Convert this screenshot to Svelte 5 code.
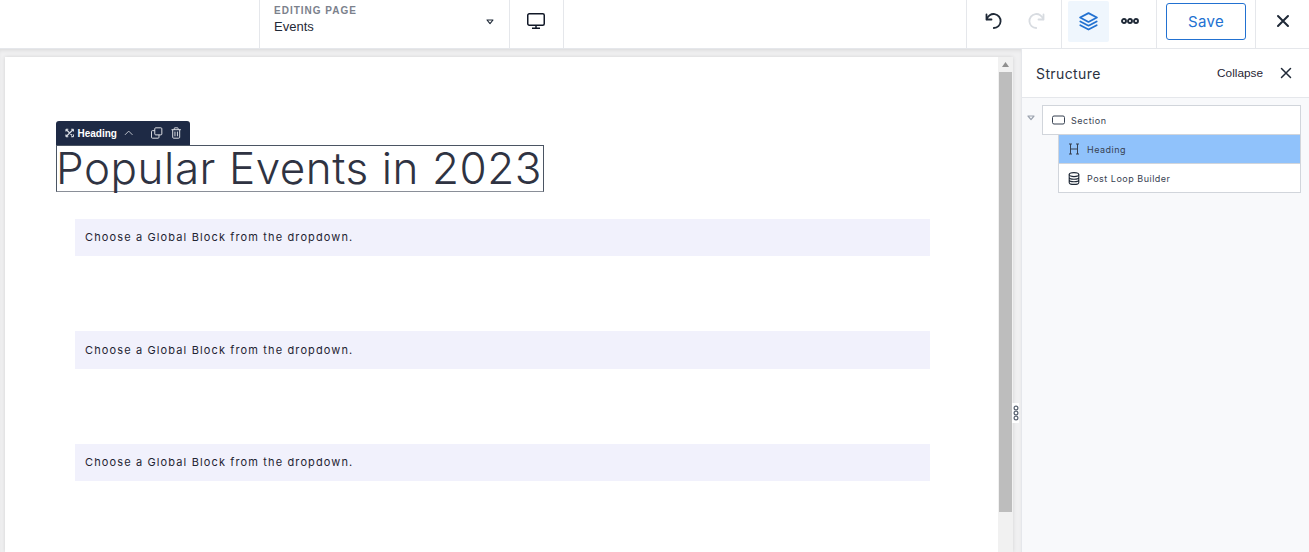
<script lang="ts">
  const blocks = [1, 2, 3];
</script>

<div class="app">
  <header class="topbar">
    <div class="page-select">
      <div class="page-text">
        <span class="eyebrow">EDITING PAGE</span>
        <span class="page-name">Events</span>
      </div>
      <svg class="caret" width="8" height="6" viewBox="0 0 8 6"><path d="M1 1h6L4 4.6z" fill="none" stroke="#1f2937" stroke-width="1.1" stroke-linejoin="round" /></svg>
    </div>
    <div class="device">
      <svg width="20" height="18" viewBox="0 0 20 18" fill="none" stroke="#111827" stroke-width="1.5">
        <rect x="1.75" y="1.75" width="16.5" height="11.5" rx="1.5" />
        <path d="M10 13.5v2.5M6 16.3h8" />
      </svg>
    </div>
    <div class="spacer"></div>
    <div class="history">
      <svg width="20" height="20" viewBox="0 0 20 20" fill="none" stroke="#1f2937" stroke-width="1.8" stroke-linecap="round" stroke-linejoin="round">
        <path d="M2.5 3.5v5h5" />
        <path d="M2.8 8.3A7 7 0 1 1 9.8 17" />
      </svg>
      <svg width="20" height="20" viewBox="0 0 20 20" fill="none" stroke="#d8dce1" stroke-width="1.8" stroke-linecap="round" stroke-linejoin="round">
        <path d="M17.5 3.5v5h-5" />
        <path d="M17.2 8.3A7 7 0 1 0 10.2 17" />
      </svg>
    </div>
    <div class="tools">
      <div class="layers">
        <svg width="21" height="21" viewBox="0 0 20 20" fill="none" stroke="#2271d1" stroke-width="1.7" stroke-linejoin="round" stroke-linecap="round">
          <path d="M10 2l8 4.2-8 4.2-8-4.2z" />
          <path d="M2.2 10l7.8 4 7.8-4" />
          <path d="M2.2 13.6l7.8 4 7.8-4" />
        </svg>
      </div>
      <svg class="dots" width="18" height="6" viewBox="0 0 18 6" fill="none" stroke="#1f2937" stroke-width="1.9">
        <circle cx="3" cy="3" r="2" /><circle cx="9" cy="3" r="2" /><circle cx="15" cy="3" r="2" />
      </svg>
    </div>
    <div class="save-wrap">
      <button class="save">Save</button>
    </div>
    <div class="close">
      <svg width="14" height="14" viewBox="0 0 14 14" stroke="#1f2937" stroke-width="2" stroke-linecap="round"><path d="M2 2l10 10M12 2L2 12" /></svg>
    </div>
  </header>

  <div class="body">
    <main class="canvas">
      <div class="page">
        <div class="page-scroll">
          <div class="heading-wrap">
            <div class="block-bar">
              <svg width="10" height="10" viewBox="0 0 10 10" fill="none" stroke="#d5d9e0" stroke-width="1.2"><path d="M1 1l8 8M9 1L1 9M1 1h2.5M1 1v2.5M9 1H6.5M9 1v2.5M1 9h2.5M1 9V6.5M9 9H6.5M9 9V6.5" /></svg>
              <span class="bar-label">Heading</span>
              <svg class="chev" width="10" height="6" viewBox="0 0 10 6" fill="none" stroke="#c3c8d0" stroke-width="1"><path d="M1 5l4-4 4 4" /></svg>
              <svg class="copy" width="12" height="12" viewBox="0 0 12 12" fill="none" stroke="#e5e7eb" stroke-width="1"><rect x="4" y="0.5" width="7.5" height="7.5" rx="1" /><path d="M4 3.5H1.5a1 1 0 0 0-1 1v6a1 1 0 0 0 1 1h6a1 1 0 0 0 1-1V8" /></svg>
              <svg class="trash" width="11" height="12" viewBox="0 0 11 12" fill="none" stroke="#e5e7eb" stroke-width="1"><path d="M0.5 2.5h10M3.5 2.5V1a.5.5 0 0 1 .5-.5h3a.5.5 0 0 1 .5.5v1.5M1.8 2.5v8a1 1 0 0 0 1 1h5.4a1 1 0 0 0 1-1v-8M4.2 4.5v5M6.8 4.5v5" /></svg>
            </div>
            <h1 class="heading">Popular Events in 2023</h1>
          </div>

          {#each blocks as block (block)}
            <div class="notice">Choose a Global Block from the dropdown.</div>
          {/each}
        </div>

        <div class="scrollbar">
          <svg width="7" height="5" viewBox="0 0 7 5"><path d="M3.5 0L7 5H0z" fill="#8f8f8f" /></svg>
          <div class="thumb"></div>
        </div>
      </div>

      <div class="resize">
        <svg width="6" height="16" viewBox="0 0 6 16" fill="none" stroke="#5b6472" stroke-width="1.2">
          <circle cx="3" cy="3" r="1.9" /><circle cx="3" cy="8" r="1.9" /><circle cx="3" cy="13" r="1.9" />
        </svg>
      </div>
    </main>

    <aside class="panel">
      <div class="panel-head">
        <span class="panel-title">Structure</span>
        <span class="collapse">Collapse</span>
        <svg width="12" height="12" viewBox="0 0 12 12" stroke="#1f2937" stroke-width="1.5" stroke-linecap="round"><path d="M1.5 1.5l9 9M10.5 1.5l-9 9" /></svg>
      </div>
      <div class="tree">
        <div class="section-row">
          <svg class="tree-caret" width="8" height="6" viewBox="0 0 8 6"><path d="M1 1h6L4 4.6z" fill="none" stroke="#9ca3af" stroke-width="1.2" stroke-linejoin="round" /></svg>
          <div class="node root">
            <svg width="13" height="10" viewBox="0 0 13 10" fill="none" stroke="#374151" stroke-width="1"><rect x="0.5" y="1" width="12" height="8" rx="1.5" /></svg>
            <span>Section</span>
          </div>
        </div>
        <div class="children">
          <div class="node selected">
            <svg width="12" height="12" viewBox="0 0 12 12" fill="none" stroke="#374151" stroke-width="1"><path d="M2.5 1v10M9.5 1v10M2.5 6h7M1 1h3M8 1h3M1 11h3M8 11h3" /></svg>
            <span>Heading</span>
          </div>
          <div class="node last">
            <svg width="12" height="13" viewBox="0 0 12 13" fill="none" stroke="#1f2937" stroke-width="1.1"><ellipse cx="6" cy="2.6" rx="4.8" ry="2" /><path d="M1.2 2.6v7.8c0 1.1 2.1 2 4.8 2s4.8-.9 4.8-2V2.6M1.2 5.2c0 1.1 2.1 2 4.8 2s4.8-.9 4.8-2M1.2 7.8c0 1.1 2.1 2 4.8 2s4.8-.9 4.8-2" /></svg>
            <span>Post Loop Builder</span>
          </div>
        </div>
      </div>
    </aside>
  </div>
</div>

<style>
  :global(body) {
    margin: 0;
    background: #fff;
    font-family: "Liberation Sans", Arial, sans-serif;
    overflow: hidden;
  }

  .app {
    width: 1309px;
    height: 552px;
    display: flex;
    flex-direction: column;
    overflow: hidden;
  }

  .topbar {
    height: 48px;
    flex: none;
    display: flex;
    background: #fff;
    border-bottom: 1px solid #e5e7eb;
    padding-left: 259px;
  }

  .page-select {
    width: 251px;
    display: flex;
    align-items: center;
    justify-content: space-between;
    padding: 0 15px 0 14px;
    box-sizing: border-box;
    border-left: 1px solid #e5e7eb;
    border-right: 1px solid #e5e7eb;
  }

  .page-text {
    display: flex;
    flex-direction: column;
    gap: 2px;
    margin-top: -9px;
  }

  .eyebrow {
    font-size: 10px;
    line-height: 12px;
    letter-spacing: 1px;
    font-weight: 700;
    color: #7b818c;
  }

  .page-name {
    font-size: 13px;
    line-height: 16px;
    color: #1f2937;
  }

  .caret {
    margin-top: -5px;
  }

  .device {
    width: 54px;
    display: flex;
    align-items: center;
    justify-content: center;
    padding: 0 2px 6px 0;
    box-sizing: border-box;
    border-right: 1px solid #e5e7eb;
  }

  .spacer {
    flex: 1;
  }

  .history {
    width: 96px;
    display: flex;
    align-items: center;
    justify-content: center;
    gap: 22px;
    padding: 0 0 6px 2px;
    box-sizing: border-box;
    border-left: 1px solid #e5e7eb;
    border-right: 1px solid #e5e7eb;
  }

  .tools {
    width: 95px;
    display: flex;
    align-items: center;
    padding-left: 6px;
    box-sizing: border-box;
    border-right: 1px solid #e5e7eb;
  }

  .layers {
    width: 41px;
    height: 41px;
    margin-top: -6px;
    background: #eff6fd;
    display: flex;
    align-items: center;
    justify-content: center;
    border-radius: 2px;
  }

  .dots {
    margin: -6px 0 0 12px;
  }

  .save-wrap {
    width: 99px;
    display: flex;
    justify-content: center;
    padding-top: 3px;
    box-sizing: border-box;
    border-right: 1px solid #e5e7eb;
  }

  .save {
    width: 80px;
    height: 37px;
    background: #fff;
    border: 1px solid #2271d1;
    border-radius: 3px;
    color: #2271d1;
    font-family: "Inter", sans-serif;
    font-size: 15px;
    letter-spacing: 0.3px;
    padding: 0;
  }

  .close {
    width: 53px;
    flex: none;
    display: flex;
    align-items: center;
    justify-content: center;
    padding-bottom: 6px;
  }

  .body {
    flex: 1;
    display: flex;
    min-height: 0;
  }

  .canvas {
    flex: 1;
    position: relative;
    background: #f0f0f1;
    padding: 8px 8px 0 5px;
    display: flex;
    min-width: 0;
    box-shadow: inset 0 3px 4px -2px rgba(0, 0, 0, 0.1);
  }

  .page {
    flex: 1;
    display: flex;
    background: #fff;
    box-shadow: 0 0 4px rgba(0, 0, 0, 0.12);
    min-width: 0;
  }

  .page-scroll {
    flex: 1;
    min-width: 0;
    padding: 88px 68px 0 51px;
  }

  .heading-wrap {
    position: relative;
    margin-bottom: 26.5px;
  }

  .block-bar {
    position: absolute;
    left: 0;
    top: -24px;
    width: 134px;
    height: 24px;
    box-sizing: border-box;
    background: #1e2a45;
    border-radius: 3px 3px 0 0;
    display: flex;
    align-items: center;
    padding: 0 9px;
    color: #fff;
  }

  .bar-label {
    font-size: 10px;
    font-weight: 700;
    margin-left: 3px;
  }

  .chev {
    margin-left: 7px;
  }

  .copy {
    margin-left: 18px;
  }

  .trash {
    margin-left: 8px;
  }

  .heading {
    width: 488px;
    height: 47px;
    box-sizing: border-box;
    margin: 0;
    border: 1px solid #4b5563;
    border-bottom-color: #8a8f98;
    color: #2f3342;
    font-family: "Inter", sans-serif;
    font-size: 44px;
    font-weight: 300;
    line-height: 44px;
    letter-spacing: 0.55px;
    white-space: nowrap;
    text-indent: -1px;
  }

  .notice {
    margin: 0 0 75px 19px;
    height: 37.5px;
    box-sizing: border-box;
    background: #f1f1fc;
    padding-left: 10px;
    display: flex;
    align-items: center;
    font-family: "Inter", sans-serif;
    font-size: 11px;
    letter-spacing: 1.13px;
    color: #1f2433;
  }

  .scrollbar {
    width: 15px;
    flex: none;
    background: #f1f1f1;
    display: flex;
    flex-direction: column;
    align-items: center;
    padding-top: 5px;
    box-sizing: border-box;
  }

  .thumb {
    margin-top: 5px;
    width: 13px;
    height: 440px;
    background: #bdbdbd;
  }

  .resize {
    position: absolute;
    right: 2px;
    top: 354px;
    width: 7px;
    height: 20px;
    background: #fff;
    display: flex;
    align-items: center;
    justify-content: center;
  }

  .panel {
    width: 288px;
    flex: none;
    background: #f8f9fb;
    border-left: 1px solid #e5e7eb;
    box-sizing: border-box;
  }

  .panel-head {
    height: 49px;
    box-sizing: border-box;
    background: #fff;
    border-bottom: 1px solid #e5e7eb;
    display: flex;
    align-items: center;
    padding: 0 17px 0 14px;
  }

  .panel-title {
    flex: 1;
    font-family: "Inter", sans-serif;
    font-size: 14px;
    letter-spacing: 0.4px;
    color: #2b3240;
  }

  .collapse {
    font-size: 11.8px;
    color: #1f2433;
    margin-right: 17px;
  }

  .tree {
    padding: 7px 8px 0 5px;
  }

  .section-row {
    display: flex;
    align-items: center;
    gap: 7px;
  }

  .tree-caret {
    margin-top: -4px;
  }

  .node {
    display: flex;
    align-items: center;
    height: 29px;
    box-sizing: border-box;
    padding-left: 9px;
    gap: 7px;
    background: #fff;
    font-family: "Inter", sans-serif;
    font-size: 9px;
    letter-spacing: 0.5px;
    color: #374151;
  }

  .node svg {
    flex: none;
  }

  .root {
    flex: 1;
    height: 30px;
    gap: 6px;
    border: 1px solid #d1d5db;
  }

  .last {
    height: 28px;
  }

  .children {
    margin-left: 31px;
    border: 1px solid #d1d5db;
    border-top: 0;
  }

  .selected {
    background: #90c2fb;
    border-bottom: 1px solid #d1d5db;
  }
</style>
